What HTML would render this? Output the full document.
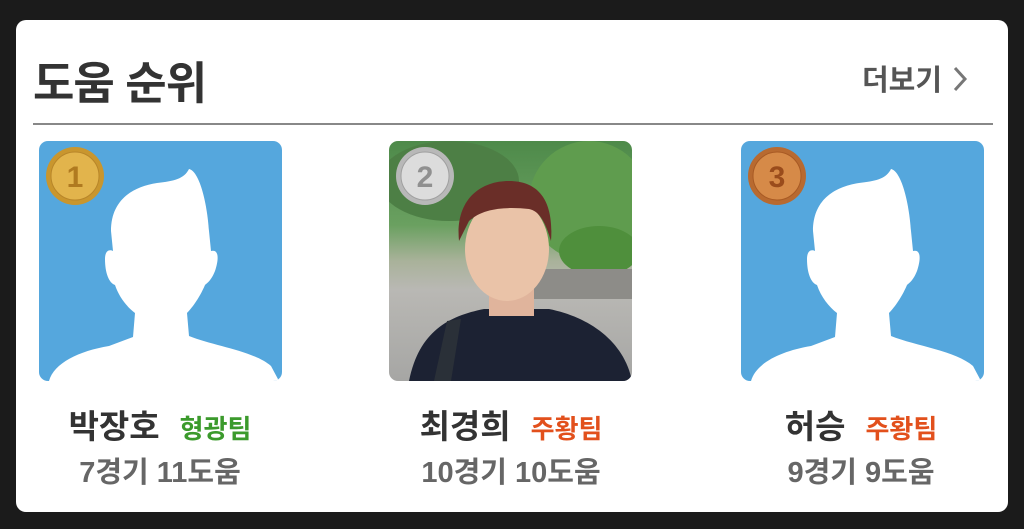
<!DOCTYPE html>
<html><head><meta charset="utf-8"><style>
*{margin:0;padding:0;box-sizing:border-box}
body{width:1024px;height:529px;background:#1b1b1b;font-family:"Liberation Sans","Noto Sans CJK KR",sans-serif;position:relative;overflow:hidden}
.card{position:absolute;left:16px;top:20px;width:992px;height:492px;background:#fff;border-radius:10px}
.title{position:absolute;left:33px;top:56px;font-size:45px;font-weight:bold;color:#333;line-height:56px;letter-spacing:-1px}
.more{position:absolute;left:862px;top:61px;font-size:29px;font-weight:bold;color:#555;line-height:40px;white-space:nowrap}
.line{position:absolute;left:33px;top:123px;width:960px;height:2px;background:#888}
.pic{position:absolute;top:141px;width:243px;height:240px;border-radius:9px;overflow:hidden;background:#55a7dd}
.name{position:absolute;top:405px;width:300px;text-align:center;font-size:33px;font-weight:bold;color:#333;line-height:44px;white-space:nowrap}
.name span{font-size:26px;margin-left:20px}
.stat{position:absolute;top:453px;width:300px;text-align:center;font-size:29px;font-weight:bold;color:#666;line-height:40px;white-space:nowrap}
.g{color:#3b9a2c}.o{color:#e2501c}
</style></head><body>
<div class="card"></div>
<div class="title">도움 순위</div>
<div class="more">더보기<svg width="16" height="28" viewBox="0 0 16 28" style="vertical-align:-3px;margin-left:10px"><path d="M3 3 L13 14 L3 25" stroke="#777" stroke-width="3" fill="none"/></svg></div>
<div class="line"></div>

<svg width="0" height="0" style="position:absolute"><defs>
<symbol id="sil" viewBox="0 0 243 240"><path fill="#fff" d="M150 28 C160 30 168 60 170 90 L172 110 C180 108 180 118 176 130 C172 140 168 142 166 144 C160 158 152 168 148 172 L150 195 C175 205 215 210 232 225 L240 240 L10 240 C15 222 40 210 70 205 L94 196 L96 172 C88 166 80 156 76 144 C70 142 66 132 66 118 C66 110 70 108 74 110 L72 90 C72 60 92 46 118 42 C135 40 145 38 150 28 Z"/></symbol>
</defs></svg>

<div class="pic" style="left:39px"><svg width="243" height="240"><use href="#sil"/></svg>
<svg style="position:absolute;left:6px;top:5px" width="60" height="60"><circle cx="30" cy="30" r="29" fill="#c9962e"/><circle cx="30" cy="30" r="24" fill="#e2b44c" stroke="#b8862a"/><text x="30" y="41" text-anchor="middle" font-size="30" font-weight="bold" fill="#b07a20" font-family="Liberation Sans">1</text></svg></div>

<div class="pic" style="left:389px;background:linear-gradient(180deg,#4e8a4a 0%,#6aa060 35%,#a9b29a 50%,#b9b8b4 62%,#a6a6a4 100%)">
<svg width="243" height="240" style="position:absolute;left:0;top:0">
<ellipse cx="200" cy="60" rx="60" ry="60" fill="#5f9c4e"/><ellipse cx="60" cy="40" rx="70" ry="40" fill="#4d7f45"/>
<ellipse cx="210" cy="110" rx="40" ry="25" fill="#4f8f3c"/>
<rect x="140" y="128" width="103" height="30" fill="#8d8c88"/>
<path d="M20 240 C30 190 60 175 95 168 L160 168 C200 176 235 200 243 240 Z" fill="#1c2233"/>
<rect x="100" y="140" width="45" height="35" fill="#e0b49c"/>
<ellipse cx="118" cy="108" rx="42" ry="52" fill="#eac3a8"/>
<path d="M70 100 C66 60 90 40 120 40 C150 40 165 60 162 100 C156 80 150 70 140 68 C120 66 95 66 80 80 Z" fill="#6a2e28"/>
<path d="M45 240 L58 180 L72 178 L62 240 Z" fill="#2a3038"/>
</svg>
<svg style="position:absolute;left:6px;top:5px" width="60" height="60"><circle cx="30" cy="30" r="29" fill="#b8b8b8"/><circle cx="30" cy="30" r="24" fill="#dcdcdc" stroke="#a0a0a0"/><text x="30" y="41" text-anchor="middle" font-size="30" font-weight="bold" fill="#909090" font-family="Liberation Sans">2</text></svg></div>

<div class="pic" style="left:741px"><svg width="243" height="240"><use href="#sil"/></svg>
<svg style="position:absolute;left:6px;top:5px" width="60" height="60"><circle cx="30" cy="30" r="29" fill="#b86a30"/><circle cx="30" cy="30" r="24" fill="#d68a48" stroke="#a85a24"/><text x="30" y="41" text-anchor="middle" font-size="30" font-weight="bold" fill="#9a4c1c" font-family="Liberation Sans">3</text></svg></div>

<div class="name" style="left:10px">박장호<span class="g">형광팀</span></div>
<div class="stat" style="left:10px">7경기 11도움</div>
<div class="name" style="left:361px">최경희<span class="o">주황팀</span></div>
<div class="stat" style="left:361px">10경기 10도움</div>
<div class="name" style="left:711px">허승<span class="o">주황팀</span></div>
<div class="stat" style="left:711px">9경기 9도움</div>
</body></html>
